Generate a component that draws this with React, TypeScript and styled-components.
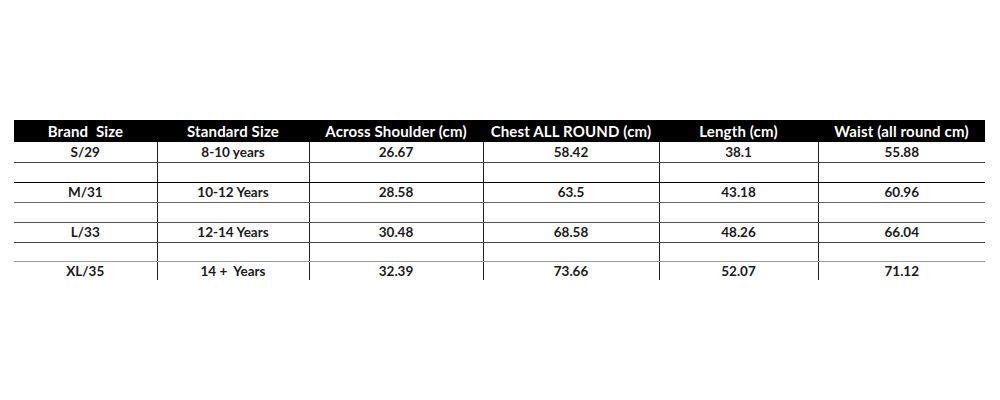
import React from "react";
import styled, { createGlobalStyle } from "styled-components";

const GlobalStyle = createGlobalStyle`
  html, body {
    margin: 0;
    padding: 0;
    background: #ffffff;
  }
`;

const Page = styled.div`
  width: 1000px;
  height: 400px;
  padding: 120px 0 0 14px;
  box-sizing: border-box;
  font-family: Lato, "Open Sans", "Liberation Sans", sans-serif;
`;

const Table = styled.table`
  width: 971px;
  border-collapse: collapse;
  table-layout: fixed;
`;

const HeadCell = styled.th`
  height: 22px;
  padding: 0;
  background: #000000;
  color: #ffffff;
  font-size: 15px;
  font-weight: 700;
  letter-spacing: 0.15px;
  text-align: center;
  vertical-align: middle;
  white-space: pre;
`;

const Row = styled.tr<{ line: string; h: number }>`
  height: ${({ h }) => h}px;
  & > td {
    border-bottom: 1px solid ${({ line }) => line};
  }
`;

const Cell = styled.td`
  padding: 0;
  color: #1a1a1a;
  font-size: 13.5px;
  font-weight: 700;
  text-align: center;
  vertical-align: middle;
  white-space: pre;
  border-left: 1px solid #222222;

  &:first-child {
    border-left: none;
  }
`;

const columns = [
  { title: "Brand  Size", width: 143 },
  { title: "Standard Size", width: 152 },
  { title: "Across Shoulder (cm)", width: 174 },
  { title: "Chest ALL ROUND (cm)", width: 176 },
  { title: "Length (cm)", width: 159 },
  { title: "Waist (all round cm)", width: 167 },
];

const rows: { cells: string[]; line: string; h: number }[] = [
  { cells: ["S/29", "8-10 years", "26.67", "58.42", "38.1", "55.88"], line: "#444", h: 20 },
  { cells: ["", "", "", "", "", ""], line: "#000", h: 20 },
  { cells: ["M/31", "10-12 Years", "28.58", "63.5", "43.18", "60.96"], line: "#666", h: 20 },
  { cells: ["", "", "", "", "", ""], line: "#555", h: 20 },
  { cells: ["L/33", "12-14 Years", "30.48", "68.58", "48.26", "66.04"], line: "#444", h: 20 },
  { cells: ["", "", "", "", "", ""], line: "#999", h: 19 },
  { cells: ["XL/35", "14 +  Years", "32.39", "73.66", "52.07", "71.12"], line: "transparent", h: 19 },
];

export default function App() {
  return (
    <>
      <GlobalStyle />
      <Page>
        <Table>
          <colgroup>
            {columns.map((c) => (
              <col key={c.title} style={{ width: c.width }} />
            ))}
          </colgroup>
          <thead>
            <tr>
              {columns.map((c) => (
                <HeadCell key={c.title}>{c.title}</HeadCell>
              ))}
            </tr>
          </thead>
          <tbody>
            {rows.map((r, i) => (
              <Row key={i} line={r.line} h={r.h}>
                {r.cells.map((v, j) => (
                  <Cell key={j}>{v}</Cell>
                ))}
              </Row>
            ))}
          </tbody>
        </Table>
      </Page>
    </>
  );
}
